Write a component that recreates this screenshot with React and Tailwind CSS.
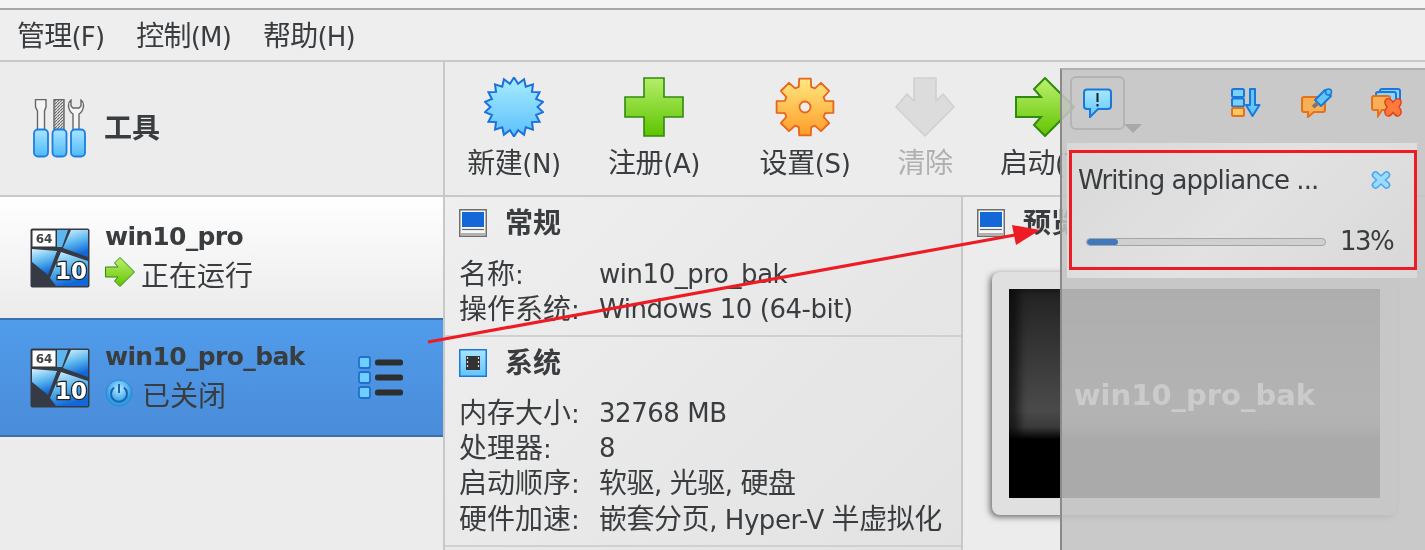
import React from "react";

const C = ({ children }) => <span className="text-[28px]">{children}</span>;

const OsIcon = () => (
  <svg width="60" height="60" viewBox="0 0 60 60" className="shrink-0">
    <defs>
      <linearGradient id="osb" x1="0" y1="0" x2="0.3" y2="1">
        <stop offset="0" stopColor="#d6f3fd" /><stop offset="0.55" stopColor="#58b4ee" /><stop offset="1" stopColor="#1268d8" />
      </linearGradient>
    </defs>
    <rect x="0.5" y="0.5" width="59" height="59" rx="2" fill="#363a45" />
    <path d="M27 2H38L32 19 27 19Z" fill="#5cb6ef" />
    <path d="M41 2H58V29L33 20Z" fill="url(#osb)" />
    <path d="M2 21L27 23 18 47 2 34Z" fill="url(#osb)" />
    <path d="M31 24L58 33V58H26L20 50Z" fill="url(#osb)" />
    <rect x="2" y="2" width="24" height="17" fill="#fff" stroke="#333" strokeWidth="1" />
    <text x="14" y="15" textAnchor="middle" fontSize="12" fontWeight="700" fill="#444" fontFamily="'DejaVu Sans'">64</text>
    <text x="41" y="51" textAnchor="middle" fontSize="23" fontWeight="700" fill="#fff" stroke="#222" strokeWidth="2.4" paintOrder="stroke" fontFamily="'DejaVu Sans'">10</text>
  </svg>
);

const Tools = () => (
  <svg width="54" height="60" viewBox="0 0 54 60" className="shrink-0">
    <defs>
      <linearGradient id="h" x1="0" y1="0" x2="0" y2="1"><stop offset="0" stopColor="#a8e4ff" /><stop offset="1" stopColor="#50baf8" /></linearGradient>
      <pattern id="hatch" width="3" height="3" patternUnits="userSpaceOnUse"><rect width="3" height="3" fill="#eee" /><path d="M0 3L3 0" stroke="#666" strokeWidth="1.2" /></pattern>
    </defs>
    <path d="M2.5 0.5H13V8L11.5 12V32H4.5V12L2.5 8Z" fill="#f4f4f4" stroke="#666" strokeWidth="1.4" />
    <rect x="21" y="0.5" width="10" height="30" fill="url(#hatch)" stroke="#666" strokeWidth="1.4" />
    <path d="M38 1C34 4 35 12 40 15V32H46V15C51 12 52 4 48 1V7L46 9H40L38 7Z" fill="#f4f4f4" stroke="#666" strokeWidth="1.4" />
    {[1, 19.5, 38].map((x) => (<rect key={x} x={x} y="30.5" width="14" height="27" rx="4" fill="url(#h)" stroke="#1c7fe0" strokeWidth="1.8" />))}
  </svg>
);

const Star = () => {
  const pts = [];
  for (let i = 0; i < 36; i++) {
    const r = i % 2 ? 23.5 : 29.5;
    const a = (i * Math.PI) / 18;
    pts.push(`${30 + r * Math.sin(a)},${30 - r * Math.cos(a)}`);
  }
  return (
    <svg width="60" height="60" viewBox="0 0 60 60">
      <defs><linearGradient id="st" x1="0" y1="0" x2="0" y2="1"><stop offset="0" stopColor="#a8ecff" /><stop offset="1" stopColor="#5cc0fa" /></linearGradient></defs>
      <polygon points={pts.join(" ")} fill="url(#st)" stroke="#1a70dc" strokeWidth="2" />
    </svg>
  );
};

const Plus = () => (
  <svg width="60" height="60" viewBox="0 0 60 60">
    <defs><linearGradient id="pl" x1="0" y1="0" x2="0" y2="1"><stop offset="0" stopColor="#b4ee6a" /><stop offset="1" stopColor="#5ec400" /></linearGradient></defs>
    <path d="M20 1H40V20H59V40H40V59H20V40H1V20H20Z" fill="url(#pl)" stroke="#2f8a10" strokeWidth="1.6" />
  </svg>
);

const Gear = () => {
  const d = [];
  const n = 8;
  for (let i = 0; i < n; i++) {
    const a = (i * 2 * Math.PI) / n;
    const w = 0.2;
    const p = (r, t) => `${(30 + r * Math.sin(a + t)).toFixed(1)} ${(30 - r * Math.cos(a + t)).toFixed(1)}`;
    d.push(`${i ? "L" : "M"}${p(21, -0.3)}L${p(29, -w)}L${p(29, w)}L${p(21, 0.3)}`);
  }
  return (
    <svg width="60" height="60" viewBox="0 0 60 60">
      <defs><linearGradient id="ge" x1="0" y1="0" x2="0" y2="1"><stop offset="0" stopColor="#ffe880" /><stop offset="1" stopColor="#ff9c28" /></linearGradient></defs>
      <path d={d.join("") + "Z"} fill="url(#ge)" stroke="#e8641a" strokeWidth="1.8" strokeLinejoin="round" />
      <circle cx="30" cy="30" r="5.5" fill="#ededed" stroke="#e8641a" strokeWidth="1.8" />
    </svg>
  );
};

const Down = () => (
  <svg width="60" height="60" viewBox="0 0 60 60">
    <path d="M19 1H41V24L48 17 59 30 30 59 1 30 12 17 19 24Z" fill="#dcdcdc" stroke="#d0d0d0" strokeWidth="1.6" strokeLinejoin="round" />
  </svg>
);

const Arrow = ({ s = 60, cls = "" }) => (
  <svg width={s} height={s} viewBox="0 0 60 60" className={`shrink-0 ${cls}`}>
    <defs><linearGradient id="ar" x1="0" y1="0" x2="0" y2="1"><stop offset="0" stopColor="#bcf070" /><stop offset="1" stopColor="#62c400" /></linearGradient></defs>
    <path d="M1 20H26L19 12 30 1 59 30 30 59 19 48 26 40H1Z" fill="url(#ar)" stroke="#2f8a10" strokeWidth="2" />
  </svg>
);

const Power = () => (
  <svg width="28" height="28" viewBox="0 0 28 28" className="shrink-0 mb-[8px]">
    <defs><radialGradient id="pw" cx="0.5" cy="0.35"><stop offset="0" stopColor="#b4ecff" /><stop offset="1" stopColor="#2f9ce4" /></radialGradient></defs>
    <circle cx="14" cy="14" r="13" fill="url(#pw)" stroke="#2b88d8" />
    <path d="M9 8.5A8 8 0 1 0 19 8.5" fill="none" stroke="#1b62b4" strokeWidth="2" />
    <path d="M14 5V14" stroke="#1b62b4" strokeWidth="2" />
  </svg>
);

const ListIcon = () => (
  <svg width="46" height="44" viewBox="0 0 46 44" className="shrink-0">
    {[0, 15, 30].map((y) => (
      <g key={y}>
        <rect x="1" y={y + 1} width="11" height="11" rx="2" fill="#6fd0ff" stroke="#1f6fd0" strokeWidth="1.8" />
        <rect x="17" y={y + 3.5} width="28" height="6" rx="2.5" fill="#2e2e2e" />
      </g>
    ))}
  </svg>
);

const Monitor = () => (
  <svg width="28" height="28" viewBox="0 0 28 28" className="shrink-0 mb-[2px]">
    <rect x="0.75" y="0.75" width="26.5" height="26.5" fill="#f6f6f6" stroke="#6e6e6e" strokeWidth="1.5" />
    <rect x="3" y="3" width="22" height="15" fill="#1467d6" />
    <path d="M3 20.5H25" stroke="#666" strokeWidth="1.2" />
    <path d="M2 25H26" stroke="#b0b0b0" strokeWidth="2" />
  </svg>
);

const Chip = () => (
  <svg width="28" height="28" viewBox="0 0 28 28" className="shrink-0 mb-[2px]">
    <defs><linearGradient id="ch" x1="0" y1="0" x2="0" y2="1"><stop offset="0" stopColor="#a8e6ff" /><stop offset="1" stopColor="#62c4fa" /></linearGradient></defs>
    <rect x="0.75" y="0.75" width="26.5" height="26.5" fill="url(#ch)" stroke="#1a78dc" strokeWidth="1.5" />
    <rect x="7" y="7" width="14" height="14" fill="#333" />
    <path d="M8.5 8V20M19.5 8V20" stroke="#ddd" strokeWidth="1.2" strokeDasharray="2 2" />
  </svg>
);

const Msg = () => (
  <svg width="30" height="30" viewBox="0 0 30 30">
    <defs><linearGradient id="ms" x1="0" y1="0" x2="0" y2="1"><stop offset="0" stopColor="#a8e8ff" /><stop offset="1" stopColor="#62c6fc" /></linearGradient></defs>
    <path d="M4 1.5H25Q28 1.5 28 4.5V18Q28 21 25 21H15L7 29V21H4Q1 21 1 18V4.5Q1 1.5 4 1.5Z" fill="url(#ms)" stroke="#1a78dc" strokeWidth="2" />
    <path d="M14.5 5V14M14.5 16V18.5" stroke="#1c1c1c" strokeWidth="2" />
  </svg>
);

const SortIco = () => (
  <svg width="30" height="30" viewBox="0 0 30 30">
    <rect x="1" y="1" width="12" height="8" rx="1.5" fill="#7cd0fc" stroke="#1a78dc" strokeWidth="2" />
    <rect x="1" y="10.5" width="12" height="8" rx="1.5" fill="#7cd0fc" stroke="#1a78dc" strokeWidth="2" />
    <rect x="1" y="20" width="12" height="8" rx="1.5" fill="#ffc860" stroke="#e8701a" strokeWidth="2" />
    <path d="M19 1H24V17H28.5L21.5 28 15 17H19Z" fill="#62c6fc" stroke="#1a78dc" strokeWidth="2" strokeLinejoin="round" />
  </svg>
);

const PinIco = () => (
  <svg width="32" height="30" viewBox="0 0 32 30">
    <path d="M3 9H22Q24 9 24 11V22Q24 24 22 24H13L7 29V24H3Q1 24 1 22V11Q1 9 3 9Z" fill="#f8b058" stroke="#e8701a" strokeWidth="2" />
    <path d="M14 12L24 2 30 8 20 18Z" fill="#62c6fc" stroke="#1a78dc" strokeWidth="2" strokeLinejoin="round" />
    <path d="M17 15L12 19" stroke="#777" strokeWidth="4" />
    <circle cx="27.5" cy="4" r="3" fill="#62c6fc" stroke="#1a78dc" strokeWidth="1.5" />
  </svg>
);

const CloseAll = () => (
  <svg width="32" height="30" viewBox="0 0 32 30">
    <rect x="9" y="1" width="20" height="16" rx="2" fill="#8cd4fa" stroke="#1a78dc" strokeWidth="2" />
    <rect x="5" y="4" width="20" height="16" rx="2" fill="#8cd4fa" stroke="#1a78dc" strokeWidth="2" />
    <path d="M3 8H17Q19 8 19 10V20Q19 22 17 22H11L7 28V22H3Q1 22 1 20V10Q1 8 3 8Z" fill="#f8b058" stroke="#e8701a" strokeWidth="2" />
    <path d="M15.5 11Q18.5 9.5 22 14 25.5 9.5 28.5 11 32 14 28 19 32 24 28.5 27.5 25.5 29.5 22 24.5 18.5 29.5 15.5 27.5 12 24 16 19 12 14 15.5 11Z" fill="#ff7a3c" stroke="#e0401a" strokeWidth="1.4" />
  </svg>
);

const SmallX = () => (
  <svg width="20" height="18" viewBox="0 0 20 18">
    <path d="M4.5 4L15.5 14M15.5 4L4.5 14" stroke="#48a6ee" strokeWidth="7.5" strokeLinecap="round" />
    <path d="M4.5 4L15.5 14M15.5 4L4.5 14" stroke="#9adcff" strokeWidth="4.5" strokeLinecap="round" />
  </svg>
);

const TB = ({ w, cjk, label, muted, children }) => (
  <div className={`flex flex-col items-center shrink-0 ${w}`}>
    <div className="h-[60px]">{children}</div>
    <span className={`mt-[10px] whitespace-nowrap leading-[34px] tracking-[-0.4px] ${muted ? "text-[#b0b0b0]" : ""}`}><C>{cjk}</C>{label}</span>
  </div>
);

const Row = ({ k, children }) => (
  <div className="flex h-[35.3px] items-center whitespace-nowrap">
    <span className="w-[140px] shrink-0"><C>{k}</C>:</span>
    <span className="tracking-[-0.45px]">{children}</span>
  </div>
);

export default function App() {
  return (
    <div className="relative w-[1425px] h-[550px] overflow-hidden bg-[#ececec] text-[#3a3d3f] text-[26px] blur-[0.5px] font-['DejaVu_Sans','Noto_Sans_CJK_SC',sans-serif]">
      <div className="h-[10px] bg-[#f4f4f4] border-b-2 border-[#a8a8a8]" />
      <div className="h-[52px] flex items-center gap-[32px] pl-[17px] pt-[3px] border-b-2 border-[#c8c8c8] bg-[#eeeeee] tracking-[-0.8px]">
        <span><C>管理</C>(F)</span><span><C>控制</C>(M)</span><span><C>帮助</C>(H)</span>
      </div>
      <div className="flex h-[488px]">
        <aside className="w-[445px] shrink-0 border-r-2 border-[#c8c8c8] flex flex-col">
          <div className="h-[135px] shrink-0 flex items-center pl-[33px] gap-[17px] border-b-2 border-[#c8c8c8] font-bold">
            <Tools /><C>工具</C>
          </div>
          <div className="h-[121px] shrink-0 flex items-center pl-[30px] gap-[15px] bg-[linear-gradient(#ffffff,#ebebeb)]">
            <OsIcon />
            <div className="flex flex-col">
              <span className="font-bold text-[25px] leading-[38px] tracking-[-0.7px]">win10_pro</span>
              <div className="flex items-center gap-[6px] h-[42px]"><Arrow s={30} cls="mb-[10px]" /><C>正在运行</C></div>
            </div>
          </div>
          <div className="h-[119px] shrink-0 flex items-center pl-[30px] pr-[39px] gap-[15px] bg-[linear-gradient(#509ceb,#4a8cd9)] border-y-2 border-[#3a70ac]">
            <OsIcon />
            <div className="flex flex-col flex-1">
              <span className="font-bold text-[25px] leading-[38px] tracking-[-0.65px]">win10_pro_bak</span>
              <div className="flex items-center gap-[9px] h-[42px]"><Power /><C>已关闭</C></div>
            </div>
            <ListIcon />
          </div>
        </aside>
        <main className="flex-1 flex flex-col min-w-0">
          <div className="h-[135px] shrink-0 flex pt-[15px] border-b-2 border-[#c8c8c8]">
            <TB w="w-[140px] -ml-[1px]" cjk="新建" label="(N)"><Star /></TB>
            <TB w="w-[140px]" cjk="注册" label="(A)"><Plus /></TB>
            <TB w="w-[162px]" cjk="设置" label="(S)"><Gear /></TB>
            <TB w="w-[78px]" cjk="清除" label="" muted><Down /></TB>
            <TB w="w-[162px]" cjk="启动" label="(T)"><Arrow /></TB>
          </div>
          <div className="flex flex-1 min-h-0">
            <div className="w-[518px] shrink-0 border-r-2 border-[#c8c8c8] flex flex-col bg-[linear-gradient(135deg,#efefef,#e2e2e2)]">
              <section className="h-[140px] shrink-0 pl-[14px] border-b-2 border-[#d0d0d0]">
                <div className="flex items-center gap-[18px] h-[54px] font-bold"><Monitor /><C>常规</C></div>
                <div className="mt-[6px]">
                  <Row k="名称">win10_pro_bak</Row>
                  <Row k="操作系统">Windows 10 (64-bit)</Row>
                </div>
              </section>
              <section className="h-[210px] shrink-0 pl-[14px] border-b-2 border-[#d0d0d0]">
                <div className="flex items-center gap-[18px] h-[54px] font-bold"><Chip /><C>系统</C></div>
                <div className="mt-[5px]">
                  <Row k="内存大小">32768 MB</Row>
                  <Row k="处理器">8</Row>
                  <Row k="启动顺序"><C>软驱</C>, <C>光驱</C>, <C>硬盘</C></Row>
                  <Row k="硬件加速"><C>嵌套分页</C>, Hyper-V <C>半虚拟化</C></Row>
                </div>
              </section>
            </div>
            <div className="flex-1 min-w-0 pl-[14px]">
              <div className="flex items-center gap-[18px] h-[54px] font-bold"><Monitor /><C>预览</C></div>
              <div className="mt-[21px] ml-[15px] w-[405px] h-[243px] rounded-[8px] bg-[#e0e0e0] shadow-[-2px_2px_6px_rgba(0,0,0,0.55)] p-[17px]">
                <div className="h-[209px] pt-[4px] flex items-center justify-center bg-[linear-gradient(#222222,#4a4a4a_58%,#3a3a3a_66%,#000000_72%)] shadow-[inset_10px_0_10px_rgba(0,0,0,0.6)]">
                  <span className="text-white font-bold text-[29px]">win10_pro_bak</span>
                </div>
              </div>
            </div>
          </div>
        </main>
      </div>

      {/* notification center overlay */}
      <div className="absolute left-[1060px] top-[68px] right-0 bottom-0 bg-[rgba(195,195,195,0.87)] border-l-2 border-t-2 border-[#8a8a8a] border-t-[#b0b0b0]">
        <div className="relative h-[73px]">
          <div className="absolute left-[8px] top-[6px] w-[55px] h-[54px] rounded-[6px] border-2 border-[#b4b4b4] flex items-center justify-center"><Msg /></div>
          <div className="absolute left-[62px] top-[54px] w-0 h-0 border-x-[9px] border-x-transparent border-t-[9px] border-t-[#a8a8a8]" />
          <div className="absolute left-[169px] top-[18px]"><SortIco /></div>
          <div className="absolute left-[239px] top-[18px]"><PinIco /></div>
          <div className="absolute left-[309px] top-[18px]"><CloseAll /></div>
        </div>
        <div className="ml-[5px] mr-[6px] w-[350px] h-[135px] bg-[linear-gradient(135deg,#d8d8d8,#e2e2e2_50%,#d8d8d8)] pt-[7px] pl-[2px]">
          <div className="w-[348px] h-[120px] border-[3px] border-[#ed1c24] pl-[6px] pr-[23px] flex flex-col">
            <div className="flex items-center justify-between h-[52px] mt-[1px] whitespace-nowrap">
              <span className="tracking-[-0.95px]">Writing appliance ...</span>
              <SmallX />
            </div>
            <div className="flex items-center mt-[16px] pl-[8px]">
              <div className="w-[240px] h-[8px] rounded-full border border-[#a4a4a4] bg-[#d0d0d0] shrink-0 overflow-hidden">
                <div className="w-[13%] h-full rounded-full bg-[#3f78bc]" />
              </div>
              <span className="ml-[14px] tracking-[-1.6px]">13%</span>
            </div>
          </div>
        </div>
      </div>

      {/* annotation arrow */}
      <svg className="absolute left-0 top-0 pointer-events-none" width="1425" height="550" viewBox="0 0 1425 550">
        <path d="M428 342L1015 235" stroke="#ed1c24" strokeWidth="3.2" fill="none" />
        <path d="M1040 230L1012 225 1016 245Z" fill="#ed1c24" />
      </svg>
    </div>
  );
}
